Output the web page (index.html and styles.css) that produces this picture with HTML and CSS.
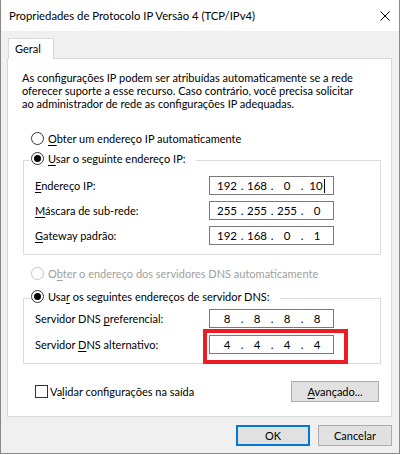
FILE: index.html
```html
<!DOCTYPE html>
<html lang="pt-BR">
<head>
  <meta charset="UTF-8" />
  <title>Propriedades de Protocolo IP Versão 4 (TCP/IPv4)</title>
  <link rel="stylesheet" href="styles.css">
</head>
<body>
  <div class="window">
    <div class="titlebar">
      <span class="title">Propriedades de Protocolo IP Versão 4 (TCP/IPv4)</span>
      <svg class="close" width="10" height="10" viewBox="0 0 10 10">
        <path d="M0.5 0.5 L9.5 9.5 M9.5 0.5 L0.5 9.5" stroke="#000" stroke-width="1" fill="none"/>
      </svg>
    </div>

    <div class="client">
      <div class="tabs">
        <div class="tab">Geral</div>
      </div>

      <div class="panel">
        <p class="intro">As configurações IP podem ser atribuídas automaticamente se a rede<br>oferecer suporte a esse recurso. Caso contrário, você precisa solicitar<br>ao administrador de rede as configurações IP adequadas.</p>

        <div class="option">
          <span class="radio"></span>
          <span class="option-text"><u>O</u>bter um endereço IP automaticamente</span>
        </div>

        <div class="group">
          <div class="group-title">
            <span class="radio checked"></span>
            <span class="option-text"><u>U</u>sar o seguinte endereço IP:</span>
          </div>
          <div class="field first">
            <span class="field-label"><u>E</u>ndereço IP:</span>
            <div class="ip-box">
              <span class="oct">192</span><span class="dot">.</span><span class="oct">168</span><span class="dot">.</span><span class="oct">0</span><span class="dot">.</span><span class="oct">10<span class="caret"></span></span>
            </div>
          </div>
          <div class="field">
            <span class="field-label"><u>M</u>áscara de sub-rede:</span>
            <div class="ip-box">
              <span class="oct">255</span><span class="dot">.</span><span class="oct">255</span><span class="dot">.</span><span class="oct">255</span><span class="dot">.</span><span class="oct">0</span>
            </div>
          </div>
          <div class="field">
            <span class="field-label"><u>G</u>ateway padrão:</span>
            <div class="ip-box">
              <span class="oct">192</span><span class="dot">.</span><span class="oct">168</span><span class="dot">.</span><span class="oct">0</span><span class="dot">.</span><span class="oct">1</span>
            </div>
          </div>
        </div>

        <div class="option dns-auto disabled">
          <span class="radio"></span>
          <span class="option-text">O<u>b</u>ter o endereço dos servidores DNS automaticamente</span>
        </div>

        <div class="group dns">
          <div class="group-title">
            <span class="radio checked"></span>
            <span class="option-text">Usa<u>r</u> os seguintes endereços de servidor DNS:</span>
          </div>
          <div class="field first">
            <span class="field-label">Servidor DNS <u>p</u>referencial:</span>
            <div class="ip-box">
              <span class="oct">8</span><span class="dot">.</span><span class="oct">8</span><span class="dot">.</span><span class="oct">8</span><span class="dot">.</span><span class="oct">8</span>
            </div>
          </div>
          <div class="field">
            <span class="field-label">Servidor <u>D</u>NS alternativo:</span>
            <div class="ip-box">
              <span class="oct">4</span><span class="dot">.</span><span class="oct">4</span><span class="dot">.</span><span class="oct">4</span><span class="dot">.</span><span class="oct">4</span>
              <span class="highlight"></span>
            </div>
          </div>
        </div>

        <div class="panel-bottom">
          <div class="check-row">
            <span class="checkbox"></span>
            <span class="option-text">Va<u>l</u>idar configurações na saída</span>
          </div>
          <button class="btn advanced"><u>A</u>vançado...</button>
        </div>
      </div>

      <div class="footer">
        <button class="btn default">OK</button>
        <button class="btn">Cancelar</button>
      </div>
    </div>
  </div>
</body>
</html>
```

FILE: styles.css
```css
body {
  margin: 0;
  background: #fff;
  font-family: "Segoe UI", Lato, "Noto Sans", sans-serif;
  font-size: 11px;
  color: #000;
}

u {
  text-decoration-thickness: 1px;
  text-underline-offset: 2px;
}

.window {
  width: 400px;
  height: 454px;
  box-sizing: border-box;
  border: 1px solid #888;
  border-top: none;
  background: #f0f0f0;
  display: flex;
  flex-direction: column;
  overflow: hidden;
}

.titlebar {
  height: 31px;
  flex-shrink: 0;
  background: #fff;
  display: flex;
  align-items: center;
  justify-content: space-between;
  padding: 0 9px 0 8px;
  font-size: 11.3px;
}

.close {
  display: block;
}

.client {
  padding: 7px 7px 0 6px;
}

.tabs {
  height: 20px;
  display: flex;
}

.tab {
  margin-left: 1px;
  width: 46px;
  height: 21px;
  box-sizing: border-box;
  border: 1px solid #d9d9d9;
  border-bottom: none;
  background: #fff;
  padding-left: 6px;
  line-height: 19px;
  position: relative;
  z-index: 1;
}

.panel {
  border: 1px solid #d9d9d9;
  background: #fff;
  padding: 12px 10px 14px 15px;
}

.intro {
  margin: 0 0 0 -1px;
  line-height: 13px;
  white-space: nowrap;
}

.option {
  display: flex;
  align-items: center;
  height: 16px;
  margin: 20px 0 0 8px;
}

.option-text {
  margin-left: 4px;
  white-space: nowrap;
}

.option.disabled {
  color: #a0a0a0;
}

.option.disabled .radio {
  border-color: #c4c4c4;
}

.dns-auto {
  margin-top: 10px;
}

.radio {
  width: 13px;
  height: 13px;
  box-sizing: border-box;
  border: 1px solid #333;
  border-radius: 50%;
  background: #fff;
  display: flex;
  align-items: center;
  justify-content: center;
  flex-shrink: 0;
}

.radio.checked::after {
  content: "";
  width: 7px;
  height: 7px;
  border-radius: 50%;
  background: #000;
}

.group {
  margin-top: 14px;
  border: 1px solid #dcdcdc;
  padding: 0 10px 9px 11px;
}

.group.dns {
  margin-top: 17px;
}

.group-title {
  display: flex;
  align-items: center;
  width: fit-content;
  height: 16px;
  margin: -11px 0 0 -5px;
  padding: 0 10px 0 1px;
  background: #fff;
}

.field {
  display: flex;
  align-items: center;
  height: 19px;
  margin-top: 6px;
}

.group.dns .field {
  margin-top: 7px;
}

.field.first {
  margin-top: 10px;
}

.group.dns .field.first {
  margin-top: 5px;
}

.field-label {
  width: 174px;
  white-space: nowrap;
}

.ip-box {
  width: 125px;
  height: 19px;
  box-sizing: border-box;
  border: 1px solid #7a7a7a;
  padding-left: 5px;
  display: flex;
  align-items: center;
  position: relative;
  font-size: 11.5px;
}

.oct {
  width: 24px;
  text-align: center;
  display: flex;
  justify-content: center;
  align-items: center;
}

.dot {
  width: 6px;
  text-align: center;
}

.caret {
  width: 1px;
  height: 14px;
  background: #000;
  margin-left: 1px;
}

.highlight {
  position: absolute;
  left: -7px;
  top: -7px;
  width: 145px;
  height: 35px;
  box-sizing: border-box;
  border: 4px solid #ed1c24;
}

.panel-bottom {
  margin-top: 17px;
  display: flex;
  align-items: center;
  justify-content: space-between;
}

.check-row {
  display: flex;
  align-items: center;
  margin-left: 12px;
}

.checkbox {
  width: 13px;
  height: 13px;
  box-sizing: border-box;
  border: 1px solid #333;
  background: #fff;
}

.check-row .option-text {
  margin-left: 2px;
}

.btn {
  height: 21px;
  width: 74px;
  padding: 0;
  background: #e1e1e1;
  border: 1px solid #adadad;
  font: inherit;
  color: #000;
}

.btn.advanced {
  width: 88px;
  margin-right: 2px;
}

.btn.default {
  border: 2px solid #0078d7;
}

.footer {
  margin-top: 8px;
  display: flex;
  justify-content: flex-end;
  gap: 8px;
}
```
